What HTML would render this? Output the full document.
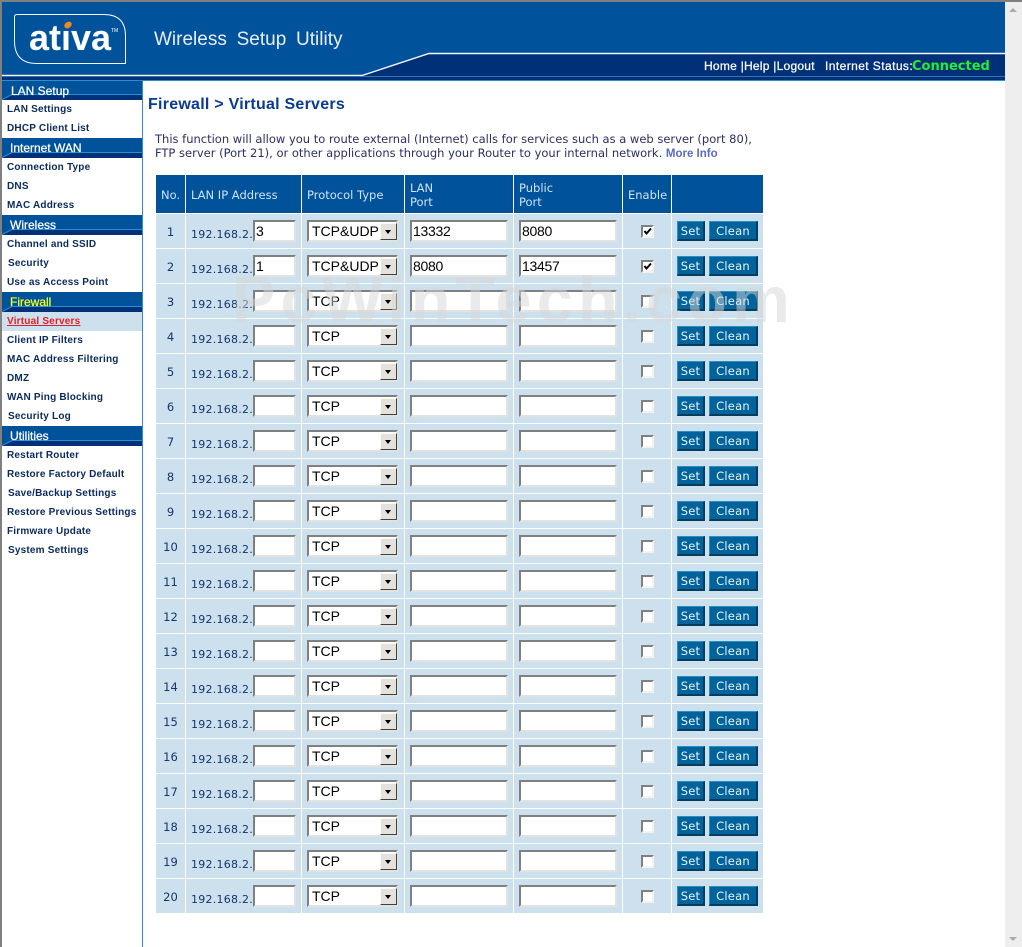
<!DOCTYPE html>
<html><head><meta charset="utf-8"><title>Firewall</title>
<style>
html,body{margin:0;padding:0;width:1022px;height:947px;overflow:hidden;background:#fff}
body{position:relative;font-family:"DejaVu Sans","Liberation Sans",sans-serif}
.a{position:absolute}
.sh{position:absolute;left:2px;width:140px;background:#00529b;color:#fff;font:normal 12px/16px "Liberation Sans",sans-serif;-webkit-text-stroke:.25px currentColor;overflow:hidden}
.sh span{position:absolute;top:2px;white-space:nowrap;z-index:1}
.sh svg{position:absolute;left:0;bottom:0}
.si{position:absolute;left:2px;width:140px;height:19px;font:bold 10px/19px "Liberation Sans",sans-serif;letter-spacing:.2px;color:#0a2a5e;white-space:nowrap}
.si span{position:absolute;left:5px;top:0}
table{position:absolute;left:155px;top:174px;border-collapse:separate;border-spacing:1px;table-layout:fixed;width:609px;background:#fff}
th{background:#00529b;color:#cfe3f3;font:normal 11.5px/14px "DejaVu Sans",sans-serif;height:38px;padding:2px 0 0 5px;text-align:left;box-sizing:border-box}
td{background:#cde0ee;height:34px;padding:0;position:relative;color:#14366e;font-size:11px}
.n{position:absolute;left:0;width:29px;top:11px;line-height:15px;text-align:center;font-size:11.5px}
.ip{position:absolute;left:5px;top:13px;line-height:15px;letter-spacing:.25px;white-space:nowrap;font-size:11px}
input.t{position:absolute;top:6px;box-sizing:border-box;height:22px;border-style:solid;border-width:2px;border-color:#808080 #e4e2de #e4e2de #808080;background:#fff;padding:0 1px;margin:0;font:14px "Liberation Sans",sans-serif;letter-spacing:-.3px;color:#000;outline:0;border-radius:0}
.ipi{left:67px;width:43px}
.pt{left:5px;width:98px}
select{position:absolute;left:5px;top:6px;width:91px;height:22px;box-sizing:border-box;appearance:none;-webkit-appearance:none;border-style:solid;border-width:2px;border-color:#808080 #e4e2de #e4e2de #808080;border-radius:0;background:#fff;margin:0;padding:0 0 0 3px;font:14px "Liberation Sans",sans-serif;color:#000;outline:0}
.ar{position:absolute;left:78px;top:9px;width:17px;height:17px;box-sizing:border-box;background:#e4e2dc;border-style:solid;border-width:1px;border-color:#fbfaf8 #404040 #404040 #fbfaf8}
.ar:after{content:"";position:absolute;left:4px;top:6px;border-style:solid;border-width:4px 3.5px 0;border-color:#000 transparent transparent}
.cb{position:absolute;left:18px;top:11px;width:13px;height:13px;box-sizing:border-box;border-style:solid;border-width:2px;border-color:#808080 #f4f2ee #f4f2ee #808080;background:#fff}
.cb svg{position:absolute;left:0;top:0}
.b{position:absolute;top:7px;height:20px;box-sizing:border-box;background:#00639b;color:#e6f4fb;border-style:solid;border-width:1px 2px 2px 1px;border-color:#2b8fbf #073c5c #073c5c #2b8fbf;font:11.5px/18px "DejaVu Sans",sans-serif;text-align:center;letter-spacing:.2px}
.s{left:5px;width:28px}.c{left:37px;width:49px}
</style></head><body>

<!-- header -->
<div class="a" style="left:0;top:0;width:1022px;height:2px;background:#808080"></div>
<div class="a" style="left:0;top:0;width:2px;height:947px;background:#808080"></div>
<div class="a" style="left:2px;top:2px;width:1003px;height:78px;background:#00529b"></div>
<svg class="a" style="left:2px;top:50px" width="1003" height="32" viewBox="2 50 1003 32">
<polygon points="362,76 428,54 1005,54 1005,81 2,81 2,76" fill="#003078"/>
<path d="M2 75.5H362L429 53.5H1005" stroke="#f0f6fb" stroke-width="1.4" fill="none"/>
<rect x="2" y="76" width="1003" height="1" fill="#2a78b8"/>
<rect x="2" y="80" width="1003" height="1" fill="#2a8fd0"/>
</svg>
<svg class="a" style="left:13px;top:13px" width="115" height="52" viewBox="13 13 115 52">
<path d="M14.5 17Q14.500 14.500 17 14.500H104Q125.500 14.500 125.500 36V63.500H37Q14.500 63.500 14.500 41Z" fill="none" stroke="#f2f6fa" stroke-width="1"/>
</svg>
<div class="a" style="left:29px;top:17px;font:bold 36px/42px 'Liberation Sans',sans-serif;color:#fff;white-space:nowrap">ativa</div>
<div class="a" style="left:62px;top:23px;width:11px;height:8px;background:#00529b"></div>
<div class="a" style="left:64px;top:22px;width:8px;height:6px;border-radius:50%;background:#ee8a1f;transform:rotate(-35deg)"></div>
<div class="a" style="left:111px;top:28px;font:5px/6px 'Liberation Sans',sans-serif;color:#fff">TM</div>
<div class="a" style="left:154px;top:29px;font:19px/22px 'Liberation Sans',sans-serif;color:#e8eff6;word-spacing:4.5px;white-space:nowrap">Wireless Setup Utility</div>
<div class="a" style="left:704px;top:59px;font:12px/15px 'Liberation Sans',sans-serif;-webkit-text-stroke:.3px #f4f7fb;letter-spacing:.25px;color:#f4f7fb;white-space:nowrap">Home |Help |Logout</div>
<div class="a" style="left:825px;top:59px;font:12px/15px 'Liberation Sans',sans-serif;-webkit-text-stroke:.3px #f4f7fb;letter-spacing:.42px;color:#f4f7fb;white-space:nowrap">Internet Status:</div>
<div class="a" style="left:912px;top:59px;font:bold 13px/16px 'DejaVu Sans',sans-serif;color:#22ee33;white-space:nowrap">Connected</div>

<!-- scrollbar -->
<div class="a" style="left:1005px;top:2px;width:17px;height:945px;background:#eeeeee"></div>
<div class="a" style="left:1009px;top:8px;border-style:solid;border-width:0 4px 4px;border-color:transparent transparent #aaa"></div>
<div class="a" style="left:1009px;top:937px;border-style:solid;border-width:4px 4px 0;border-color:#aaa transparent transparent"></div>

<!-- sidebar -->
<div class="a" style="left:142px;top:81px;width:1px;height:866px;background:#2a8fd0"></div>
<div class="sh" style="top:81px;height:19px"><span style="left:9px">LAN Setup</span><svg width="140" height="6"><polygon points="0,6 10,1 140,1 140,6" fill="#003078"/><path d="M0 5.500L10 .5H140" stroke="#2a8fd0" fill="none"/></svg></div>
<div class="si" style="top:100px"><span>LAN Settings</span></div>
<div class="si" style="top:119px"><span>DHCP Client List</span></div>
<div class="sh" style="top:138px;height:20px"><span style="left:8px">Internet WAN</span><svg width="140" height="6"><polygon points="0,6 10,1 140,1 140,6" fill="#003078"/><path d="M0 5.500L10 .5H140" stroke="#2a8fd0" fill="none"/></svg></div>
<div class="si" style="top:158px"><span>Connection Type</span></div>
<div class="si" style="top:177px"><span>DNS</span></div>
<div class="si" style="top:196px"><span>MAC Address</span></div>
<div class="sh" style="top:215px;height:20px"><span style="left:8px">Wireless</span><svg width="140" height="6"><polygon points="0,6 10,1 140,1 140,6" fill="#003078"/><path d="M0 5.500L10 .5H140" stroke="#2a8fd0" fill="none"/></svg></div>
<div class="si" style="top:235px"><span>Channel and SSID</span></div>
<div class="si" style="top:254px"><span style="left:6px">Security</span></div>
<div class="si" style="top:273px"><span>Use as Access Point</span></div>
<div class="sh" style="top:292px;height:20px;color:#eeff22"><span style="left:8px">Firewall</span><svg width="140" height="6"><polygon points="0,6 10,1 140,1 140,6" fill="#003078"/><path d="M0 5.500L10 .5H140" stroke="#2a8fd0" fill="none"/></svg></div>
<div class="si" style="top:312px;background:#cde0ee;color:#e81c24"><span style="text-decoration:underline">Virtual Servers</span></div>
<div class="si" style="top:331px"><span>Client IP Filters</span></div>
<div class="si" style="top:350px"><span>MAC Address Filtering</span></div>
<div class="si" style="top:369px"><span>DMZ</span></div>
<div class="si" style="top:388px"><span>WAN Ping Blocking</span></div>
<div class="si" style="top:407px"><span style="left:6px">Security Log</span></div>
<div class="sh" style="top:426px;height:20px"><span style="left:8px">Utilities</span><svg width="140" height="6"><polygon points="0,6 10,1 140,1 140,6" fill="#003078"/><path d="M0 5.500L10 .5H140" stroke="#2a8fd0" fill="none"/></svg></div>
<div class="si" style="top:446px"><span>Restart Router</span></div>
<div class="si" style="top:465px"><span>Restore Factory Default</span></div>
<div class="si" style="top:484px"><span style="left:6px">Save/Backup Settings</span></div>
<div class="si" style="top:503px"><span>Restore Previous Settings</span></div>
<div class="si" style="top:522px"><span>Firmware Update</span></div>
<div class="si" style="top:541px"><span style="left:6px">System Settings</span></div>

<!-- content -->
<div class="a" style="left:148px;top:95px;font:bold 16px/19px 'Liberation Sans',sans-serif;color:#0a3a94;letter-spacing:.25px;white-space:nowrap">Firewall &gt; Virtual Servers</div>
<div class="a" style="left:155px;top:133px;font:11.5px/13.5px 'DejaVu Sans',sans-serif;color:#2b2f66;white-space:nowrap">This function will allow you to route external (Internet) calls for services such as a web server (port 80),<br>FTP server (Port 21), or other applications through your Router to your internal network. <b style="color:#5a6cc0;font-family:'Liberation Sans',sans-serif;font-size:11.5px">More Info</b></div>

<table>
<colgroup><col style="width:29px"><col style="width:115px"><col style="width:102px"><col style="width:108px"><col style="width:108px"><col style="width:48px"><col style="width:91px"></colgroup>
<tr><th>No.</th><th>LAN IP Address</th><th>Protocol Type</th><th>LAN<br>Port</th><th>Public<br>Port</th><th>Enable</th><th></th></tr>
<tr><td><div class="n">1</div></td><td><div class="ip">192.168.2.</div><input class="t ipi" value="3"></td><td><select><option>TCP&amp;UDP</option></select><i class="ar"></i></td><td><input class="t pt" value="13332"></td><td><input class="t pt" value="8080"></td><td><div class="cb"><svg width="9" height="9"><path d="M1.500 4L3.500 6.500L8 1.500" stroke="#000" stroke-width="2" fill="none"/></svg></div></td><td><div class="b s">Set</div><div class="b c">Clean</div></td></tr>
<tr><td><div class="n">2</div></td><td><div class="ip">192.168.2.</div><input class="t ipi" value="1"></td><td><select><option>TCP&amp;UDP</option></select><i class="ar"></i></td><td><input class="t pt" value="8080"></td><td><input class="t pt" value="13457"></td><td><div class="cb"><svg width="9" height="9"><path d="M1.500 4L3.500 6.500L8 1.500" stroke="#000" stroke-width="2" fill="none"/></svg></div></td><td><div class="b s">Set</div><div class="b c">Clean</div></td></tr>
<tr><td><div class="n">3</div></td><td><div class="ip">192.168.2.</div><input class="t ipi"></td><td><select><option>TCP</option></select><i class="ar"></i></td><td><input class="t pt"></td><td><input class="t pt"></td><td><div class="cb"></div></td><td><div class="b s">Set</div><div class="b c">Clean</div></td></tr>
<tr><td><div class="n">4</div></td><td><div class="ip">192.168.2.</div><input class="t ipi"></td><td><select><option>TCP</option></select><i class="ar"></i></td><td><input class="t pt"></td><td><input class="t pt"></td><td><div class="cb"></div></td><td><div class="b s">Set</div><div class="b c">Clean</div></td></tr>
<tr><td><div class="n">5</div></td><td><div class="ip">192.168.2.</div><input class="t ipi"></td><td><select><option>TCP</option></select><i class="ar"></i></td><td><input class="t pt"></td><td><input class="t pt"></td><td><div class="cb"></div></td><td><div class="b s">Set</div><div class="b c">Clean</div></td></tr>
<tr><td><div class="n">6</div></td><td><div class="ip">192.168.2.</div><input class="t ipi"></td><td><select><option>TCP</option></select><i class="ar"></i></td><td><input class="t pt"></td><td><input class="t pt"></td><td><div class="cb"></div></td><td><div class="b s">Set</div><div class="b c">Clean</div></td></tr>
<tr><td><div class="n">7</div></td><td><div class="ip">192.168.2.</div><input class="t ipi"></td><td><select><option>TCP</option></select><i class="ar"></i></td><td><input class="t pt"></td><td><input class="t pt"></td><td><div class="cb"></div></td><td><div class="b s">Set</div><div class="b c">Clean</div></td></tr>
<tr><td><div class="n">8</div></td><td><div class="ip">192.168.2.</div><input class="t ipi"></td><td><select><option>TCP</option></select><i class="ar"></i></td><td><input class="t pt"></td><td><input class="t pt"></td><td><div class="cb"></div></td><td><div class="b s">Set</div><div class="b c">Clean</div></td></tr>
<tr><td><div class="n">9</div></td><td><div class="ip">192.168.2.</div><input class="t ipi"></td><td><select><option>TCP</option></select><i class="ar"></i></td><td><input class="t pt"></td><td><input class="t pt"></td><td><div class="cb"></div></td><td><div class="b s">Set</div><div class="b c">Clean</div></td></tr>
<tr><td><div class="n">10</div></td><td><div class="ip">192.168.2.</div><input class="t ipi"></td><td><select><option>TCP</option></select><i class="ar"></i></td><td><input class="t pt"></td><td><input class="t pt"></td><td><div class="cb"></div></td><td><div class="b s">Set</div><div class="b c">Clean</div></td></tr>
<tr><td><div class="n">11</div></td><td><div class="ip">192.168.2.</div><input class="t ipi"></td><td><select><option>TCP</option></select><i class="ar"></i></td><td><input class="t pt"></td><td><input class="t pt"></td><td><div class="cb"></div></td><td><div class="b s">Set</div><div class="b c">Clean</div></td></tr>
<tr><td><div class="n">12</div></td><td><div class="ip">192.168.2.</div><input class="t ipi"></td><td><select><option>TCP</option></select><i class="ar"></i></td><td><input class="t pt"></td><td><input class="t pt"></td><td><div class="cb"></div></td><td><div class="b s">Set</div><div class="b c">Clean</div></td></tr>
<tr><td><div class="n">13</div></td><td><div class="ip">192.168.2.</div><input class="t ipi"></td><td><select><option>TCP</option></select><i class="ar"></i></td><td><input class="t pt"></td><td><input class="t pt"></td><td><div class="cb"></div></td><td><div class="b s">Set</div><div class="b c">Clean</div></td></tr>
<tr><td><div class="n">14</div></td><td><div class="ip">192.168.2.</div><input class="t ipi"></td><td><select><option>TCP</option></select><i class="ar"></i></td><td><input class="t pt"></td><td><input class="t pt"></td><td><div class="cb"></div></td><td><div class="b s">Set</div><div class="b c">Clean</div></td></tr>
<tr><td><div class="n">15</div></td><td><div class="ip">192.168.2.</div><input class="t ipi"></td><td><select><option>TCP</option></select><i class="ar"></i></td><td><input class="t pt"></td><td><input class="t pt"></td><td><div class="cb"></div></td><td><div class="b s">Set</div><div class="b c">Clean</div></td></tr>
<tr><td><div class="n">16</div></td><td><div class="ip">192.168.2.</div><input class="t ipi"></td><td><select><option>TCP</option></select><i class="ar"></i></td><td><input class="t pt"></td><td><input class="t pt"></td><td><div class="cb"></div></td><td><div class="b s">Set</div><div class="b c">Clean</div></td></tr>
<tr><td><div class="n">17</div></td><td><div class="ip">192.168.2.</div><input class="t ipi"></td><td><select><option>TCP</option></select><i class="ar"></i></td><td><input class="t pt"></td><td><input class="t pt"></td><td><div class="cb"></div></td><td><div class="b s">Set</div><div class="b c">Clean</div></td></tr>
<tr><td><div class="n">18</div></td><td><div class="ip">192.168.2.</div><input class="t ipi"></td><td><select><option>TCP</option></select><i class="ar"></i></td><td><input class="t pt"></td><td><input class="t pt"></td><td><div class="cb"></div></td><td><div class="b s">Set</div><div class="b c">Clean</div></td></tr>
<tr><td><div class="n">19</div></td><td><div class="ip">192.168.2.</div><input class="t ipi"></td><td><select><option>TCP</option></select><i class="ar"></i></td><td><input class="t pt"></td><td><input class="t pt"></td><td><div class="cb"></div></td><td><div class="b s">Set</div><div class="b c">Clean</div></td></tr>
<tr><td><div class="n">20</div></td><td><div class="ip">192.168.2.</div><input class="t ipi"></td><td><select><option>TCP</option></select><i class="ar"></i></td><td><input class="t pt"></td><td><input class="t pt"></td><td><div class="cb"></div></td><td><div class="b s">Set</div><div class="b c">Clean</div></td></tr>
</table>

<!-- watermark -->
<div class="a" style="left:232px;top:262px;font:bold 65px/75px 'Liberation Sans',sans-serif;letter-spacing:5.1px;color:rgba(214,214,214,.5);white-space:nowrap;pointer-events:none">PcWinTech.com</div>
</body></html>
